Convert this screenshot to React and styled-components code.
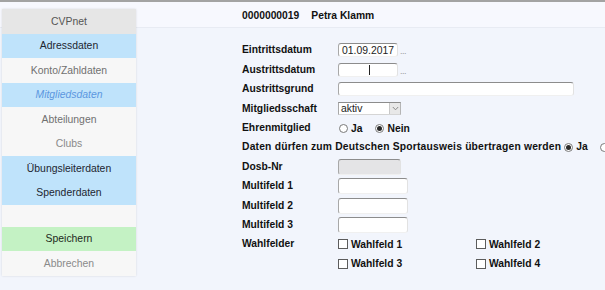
import React from "react";
import styled, { createGlobalStyle, css } from "styled-components";

const GlobalStyle = createGlobalStyle`
  html, body { margin: 0; padding: 0; }
  body { font-family: "Liberation Sans", Arial, sans-serif; }
`;

const Root = styled.div`
  width: 605px;
  height: 290px;
  overflow: hidden;
  background: linear-gradient(
    to bottom,
    #a3a3a3 0,
    #a3a3a3 2px,
    #f7f8fe 2px,
    #f7f8fe 27px,
    #e8ebf3 27px,
    #e8ebf3 28px,
    #f2f5fc 28px
  );
  display: flex;
  align-items: flex-start;
  font-family: "Liberation Sans", Arial, sans-serif;
`;

const Sidebar = styled.nav`
  flex: 0 0 134px;
  margin: 9px 0 0 2px;
  width: 134px;
  background: #f7f7f7;
  box-shadow: 0 0 2px rgba(0, 0, 0, 0.12);
  display: flex;
  flex-direction: column;
`;

const navVariants = {
  head: css`background: #e6e6e6; color: #555;`,
  blue: css`background: #bfe3fb; color: #1d2530;`,
  plain: css`background: #f7f7f7; color: #707070;`,
  current: css`background: #bfe3fb; color: #5b97e0; font-style: italic;`,
  green: css`background: #c4f2c4; color: #1c2a1c;`,
  muted: css`background: #f7f7f7; color: #8a8a8a;`,
};

const NavItem = styled.div`
  height: 24.5px;
  display: flex;
  align-items: center;
  justify-content: center;
  font-size: 10.4px;
  ${(p) => navVariants[p.$variant || "plain"]}
`;

const NavSpacer = styled.div`
  height: 21.7px;
  background: #f7f7f7;
`;

const Main = styled.main`
  flex: 1 0 auto;
  padding-left: 106px;
  font-size: 10.3px;
  font-weight: bold;
  color: #111;
`;

const Header = styled.header`
  height: 28px;
  box-sizing: border-box;
  padding-top: 10px;
  line-height: 12px;
  display: flex;
  gap: 12px;
`;

const Form = styled.div`
  margin-top: 12.8px;
  display: grid;
  grid-template-columns: 96px 1fr;
  grid-auto-rows: 19.4px;
  align-items: center;
`;

const Label = styled.div`
  line-height: 12px;
  white-space: nowrap;
`;

const Field = styled.div`
  display: flex;
  align-items: center;
  white-space: nowrap;
`;

const FullRow = styled.div`
  grid-column: 1 / -1;
  display: flex;
  align-items: center;
  white-space: nowrap;
  line-height: 12px;
`;

const Sentence = styled.span`
  letter-spacing: 0.2px;
`;

const TextBox = styled.div`
  box-sizing: border-box;
  width: ${(p) => p.$w}px;
  height: ${(p) => p.$h || 14}px;
  background: ${(p) => (p.$disabled ? "#e4e4e6" : "#fff")};
  border: 1px solid;
  border-color: #8c8c8c #e2e2e2 #f0f0f0 #a8a8a8;
  border-radius: 3px;
  font-size: 10.4px;
  font-weight: normal;
  color: #222;
  display: flex;
  align-items: center;
  padding-left: 3px;
`;

const Caret = styled.span`
  display: inline-block;
  width: 1px;
  height: 10px;
  background: #222;
  margin-left: 27px;
`;

const Dots = styled.span`
  font-size: 9px;
  font-weight: normal;
  color: #9a9a9a;
  margin-left: 2px;
  letter-spacing: -0.5px;
  align-self: flex-end;
  line-height: 12px;
`;

const Select = styled.div`
  box-sizing: border-box;
  width: 63px;
  height: 13px;
  background: #fff;
  border: 1px solid;
  border-color: #8c8c8c #b5b5b5 #d5d5d5 #a8a8a8;
  display: flex;
  align-items: center;
  font-size: 10.4px;
  font-weight: normal;
  color: #222;
`;

const SelectText = styled.span`
  flex: 1;
  padding-left: 2px;
`;

const SelectArrow = styled.span`
  width: 10px;
  height: 100%;
  background: #e8e8e8;
  border-left: 1px solid #c8c8c8;
  display: flex;
  align-items: center;
  justify-content: center;
`;

const Radio = styled.span`
  box-sizing: border-box;
  width: 9px;
  height: 9px;
  border-radius: 50%;
  border: 1px solid #7a7a7a;
  background: #fff;
  display: inline-flex;
  align-items: center;
  justify-content: center;
  margin: 0 ${(p) => p.$gap ?? 3}px 0 ${(p) => p.$lead ?? 1}px;
  &::after {
    content: "";
    width: 5px;
    height: 5px;
    border-radius: 50%;
    background: ${(p) => (p.$checked ? "#2a2a2a" : "transparent")};
  }
`;

const Box = styled.span`
  box-sizing: border-box;
  width: 10px;
  height: 10px;
  border: 1px solid #5c5c5c;
  background: #fff;
  margin-right: 3px;
`;

const ChoiceGrid = styled.div`
  display: grid;
  grid-template-columns: 138px 138px;
  align-items: center;
`;

const Choice = styled.label`
  display: flex;
  align-items: center;
`;

const Chevron = () => (
  <svg width="7" height="5" viewBox="0 0 7 5">
    <path d="M0.8 1 L3.5 3.8 L6.2 1" fill="none" stroke="#8a8a8a" strokeWidth="1" />
  </svg>
);

export default function App() {
  return (
    <Root>
      <GlobalStyle />
      <Sidebar>
        <NavItem $variant="head">CVPnet</NavItem>
        <NavItem $variant="blue">Adressdaten</NavItem>
        <NavItem $variant="plain">Konto/Zahldaten</NavItem>
        <NavItem $variant="current">Mitgliedsdaten</NavItem>
        <NavItem $variant="plain">Abteilungen</NavItem>
        <NavItem $variant="muted">Clubs</NavItem>
        <NavItem $variant="blue">Übungsleiterdaten</NavItem>
        <NavItem $variant="blue">Spenderdaten</NavItem>
        <NavSpacer />
        <NavItem $variant="green">Speichern</NavItem>
        <NavItem $variant="muted">Abbrechen</NavItem>
      </Sidebar>
      <Main>
        <Header>
          <span>0000000019</span>
          <span>Petra Klamm</span>
        </Header>
        <Form>
          <Label>Eintrittsdatum</Label>
          <Field>
            <TextBox $w={60}>01.09.2017</TextBox>
            <Dots>...</Dots>
          </Field>

          <Label>Austrittsdatum</Label>
          <Field>
            <TextBox $w={60}>
              <Caret />
            </TextBox>
            <Dots>...</Dots>
          </Field>

          <Label>Austrittsgrund</Label>
          <Field>
            <TextBox $w={236} $h={14} />
          </Field>

          <Label>Mitgliedsschaft</Label>
          <Field>
            <Select>
              <SelectText>aktiv</SelectText>
              <SelectArrow>
                <Chevron />
              </SelectArrow>
            </Select>
          </Field>

          <Label>Ehrenmitglied</Label>
          <Field>
            <Radio />
            <span>Ja</span>
            <Radio $lead={13} $checked />
            <span>Nein</span>
          </Field>

          <FullRow>
            <Sentence>Daten dürfen zum Deutschen Sportausweis übertragen werden</Sentence>
            <Radio $lead={3} $checked />
            <span>Ja</span>
            <Radio $lead={12} />
          </FullRow>

          <Label>Dosb-Nr</Label>
          <Field>
            <TextBox $w={63} $h={16} $disabled />
          </Field>

          <Label>Multifeld 1</Label>
          <Field>
            <TextBox $w={70} $h={16} />
          </Field>

          <Label>Multifeld 2</Label>
          <Field>
            <TextBox $w={70} $h={16} />
          </Field>

          <Label>Multifeld 3</Label>
          <Field>
            <TextBox $w={70} $h={16} />
          </Field>

          <Label>Wahlfelder</Label>
          <ChoiceGrid>
            <Choice>
              <Box />
              Wahlfeld 1
            </Choice>
            <Choice>
              <Box />
              Wahlfeld 2
            </Choice>
          </ChoiceGrid>

          <Label />
          <ChoiceGrid>
            <Choice>
              <Box />
              Wahlfeld 3
            </Choice>
            <Choice>
              <Box />
              Wahlfeld 4
            </Choice>
          </ChoiceGrid>
        </Form>
      </Main>
    </Root>
  );
}
